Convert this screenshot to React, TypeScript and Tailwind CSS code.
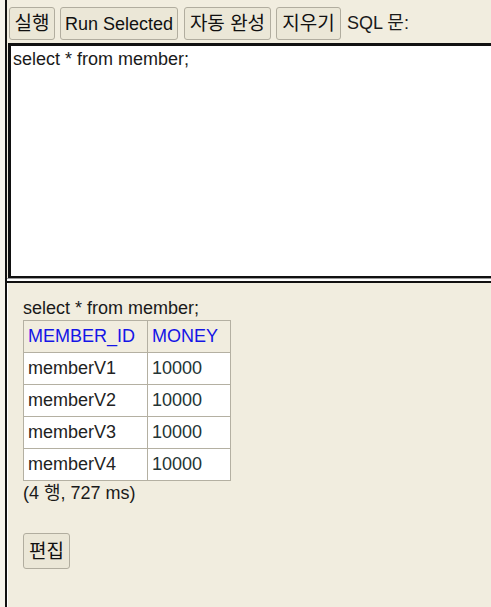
import React from "react";

const font = { fontFamily: '"Liberation Sans", Arial, "Noto Sans CJK KR", sans-serif' };

function Btn({ children, className = "" }: { children: React.ReactNode; className?: string }) {
  return (
    <button
      className={`h-[33px] px-0 shrink-0 border border-[#b1ad9f] rounded-[3px] bg-[#ebe7d7] text-[18px] leading-none text-[#111] ${className}`}
      style={font}
    >
      {children}
    </button>
  );
}

const rows = [
  ["memberV1", "10000"],
  ["memberV2", "10000"],
  ["memberV3", "10000"],
  ["memberV4", "10000"],
];

export default function App() {
  return (
    <div className="w-[491px] h-[607px] overflow-hidden bg-[#f1eddf] flex text-[18px] text-[#1a1a1a]" style={font}>
      <div className="w-[5px] shrink-0 bg-[#f6f4ec]" />
      <div className="w-[2px] shrink-0 bg-[#111]" />
      <div className="flex-1 flex flex-col min-w-0">
        {/* top frame */}
        <div className="flex flex-col">
          <div className="h-[43px] flex items-center pl-[2px] pt-[4px]">
            <Btn className="w-[46px] text-[19px]">실행</Btn>
            <Btn className="w-[118px] ml-[5px]">Run Selected</Btn>
            <Btn className="w-[87px] ml-[6px] text-[19px]">자동 완성</Btn>
            <Btn className="w-[65px] ml-[5px] text-[19px]">지우기</Btn>
            <span className="ml-[6px] whitespace-nowrap">SQL 문:</span>
          </div>
          <div className="ml-[1px] -mr-[20px] h-[235px] bg-white border-t-[3px] border-l-[3px] border-b-[2px] border-[#111] pl-[2px] pt-[2px] leading-[22px]">
            select * from member;
          </div>
          <div className="h-[1px] bg-[#9a9a9a]" />
          <div className="h-[2px] bg-white" />
          <div className="h-[2px] bg-[#111]" />
        </div>
        {/* result frame */}
        <div className="flex-1 border-l border-white pl-[15px] pt-[14px]">
          <div className="leading-[22px] mb-[1px]">select * from member;</div>
          <table className="border-collapse border border-[#b4b0a2]">
            <thead>
              <tr className="h-[32px]">
                <th className="w-[124px] text-left font-normal text-[#1515e6] border border-[#b4b0a2] px-[4px] py-0">MEMBER_ID</th>
                <th className="w-[83px] text-left font-normal text-[#1515e6] border border-[#b4b0a2] px-[4px] py-0">MONEY</th>
              </tr>
            </thead>
            <tbody>
              {rows.map((r) => (
                <tr key={r[0]} className="h-[32px] bg-white">
                  <td className="border border-[#b4b0a2] px-[4px] py-0 text-[#222]">{r[0]}</td>
                  <td className="border border-[#b4b0a2] px-[4px] py-0 text-[#243434]">{r[1]}</td>
                </tr>
              ))}
            </tbody>
          </table>
          <div className="leading-[22px] mt-[1px]">(4 행, 727 ms)</div>
          <div className="mt-[29px]">
            <Btn className="h-[36px] w-[47px] text-[19px]">편집</Btn>
          </div>
        </div>
      </div>
    </div>
  );
}
